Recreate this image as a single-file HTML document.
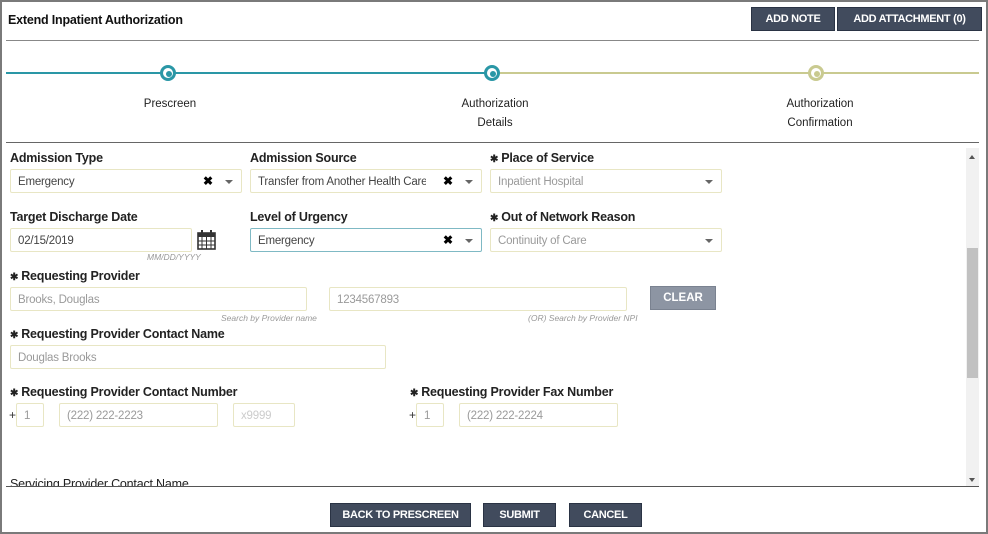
<!DOCTYPE html>
<html><head><style>
*{box-sizing:border-box;margin:0;padding:0}
body{width:988px;height:534px;background:#fff;font-family:"Liberation Sans",sans-serif;position:relative;overflow:hidden}
.a{position:absolute}
.frame{left:0;top:0;width:988px;height:534px;border:2px solid #7a7a7a}
.btn{position:absolute;background:#414b5d;color:#fff;font-weight:bold;font-size:11px;text-align:center;border:1px solid #2a3344;letter-spacing:-.3px}
.lbl{position:absolute;font-size:12.5px;color:#222;font-weight:bold;letter-spacing:-.2px}
.lbl b{font-size:10px;margin-right:3px}
.in{position:absolute;border:1px solid #e8e6c4;border-radius:2px;height:24px;font-size:11.5px;color:#9a9a9a;padding:6px 7px 0;white-space:nowrap;overflow:hidden;letter-spacing:-.2px}
.dk{color:#444}
.x{position:absolute;top:4px;font-size:12px;font-weight:bold;color:#000}
.car{position:absolute;top:10px;width:0;height:0;border-left:4px solid transparent;border-right:4px solid transparent;border-top:4px solid #666}
.hint{position:absolute;font-size:8.5px;font-style:italic;color:#999}
.dot{position:absolute;width:16px;height:16px;border-radius:50%;background:#fff}
.dot i{position:absolute;left:3px;top:3px;width:6px;height:6px;border-radius:50%}
.st{position:absolute;font-size:11.5px;color:#222;text-align:center;line-height:19px}
</style></head><body>
<div class="a frame"></div>
<div class="a" style="left:8px;top:13px;font-size:12.5px;font-weight:bold;color:#111;letter-spacing:-.2px">Extend Inpatient Authorization</div>
<div class="btn" style="left:751px;top:7px;width:84px;height:24px;line-height:23px">ADD NOTE</div>
<div class="btn" style="left:837px;top:7px;width:145px;height:24px;line-height:23px">ADD ATTACHMENT (0)</div>
<div class="a" style="left:6px;top:40px;width:973px;height:1px;background:#888"></div>
<div class="a" style="left:6px;top:72px;width:486px;height:2px;background:#2a97a6"></div>
<div class="a" style="left:492px;top:72px;width:487px;height:2px;background:#c9ca90"></div>
<div class="dot" style="left:160px;top:65px;border:3px solid #2a97a6"><i style="background:#2a97a6"></i></div>
<div class="dot" style="left:484px;top:65px;border:3px solid #2a97a6"><i style="background:#2a97a6"></i></div>
<div class="dot" style="left:808px;top:65px;border:3px solid #c9ca90"><i style="background:#c9ca90"></i></div>
<div class="st" style="left:110px;top:95px;width:120px">Prescreen</div>
<div class="st" style="left:435px;top:95px;width:120px">Authorization<br>Details</div>
<div class="st" style="left:760px;top:95px;width:120px">Authorization<br>Confirmation</div>
<div class="a" style="left:6px;top:142px;width:973px;height:1px;background:#666"></div>
<div class="a" style="left:966px;top:148px;width:13px;height:338px;background:#f1f1f1"></div>
<div class="a" style="left:967px;top:248px;width:11px;height:130px;background:#c1c1c1"></div>
<div class="a" style="left:969px;top:155px;border-left:3px solid transparent;border-right:3px solid transparent;border-bottom:4px solid #555"></div>
<div class="a" style="left:969px;top:478px;border-left:3px solid transparent;border-right:3px solid transparent;border-top:4px solid #555"></div>

<div class="lbl" style="left:10px;top:151px">Admission Type</div>
<div class="in dk" style="left:10px;top:169px;width:232px">Emergency<span class="x" style="left:192px">✖</span><span class="car" style="left:214px"></span></div>
<div class="lbl" style="left:250px;top:151px">Admission Source</div>
<div class="in dk" style="left:250px;top:169px;width:232px"><span style="display:inline-block;width:168px;overflow:hidden">Transfer from Another Health Care</span><span class="x" style="left:192px">✖</span><span class="car" style="left:214px"></span></div>
<div class="lbl" style="left:490px;top:151px"><b>✱</b>Place of Service</div>
<div class="in" style="left:490px;top:169px;width:232px">Inpatient Hospital<span class="car" style="left:214px"></span></div>

<div class="lbl" style="left:10px;top:210px">Target Discharge Date</div>
<div class="in dk" style="left:10px;top:228px;width:182px">02/15/2019</div>
<svg class="a" style="left:197px;top:230px" width="19" height="20" viewBox="0 0 19 20"><rect x="1" y="3" width="17" height="16" fill="none" stroke="#333" stroke-width="1.6"/><rect x="1" y="3" width="17" height="4" fill="#333"/><rect x="4" y="0" width="2" height="5" fill="#333"/><rect x="13" y="0" width="2" height="5" fill="#333"/><path d="M5 7v12M9.5 7v12M14 7v12M1 11h17M1 15h17" stroke="#333" stroke-width="1"/></svg>
<div class="hint" style="left:147px;top:252px">MM/DD/YYYY</div>
<div class="lbl" style="left:250px;top:210px">Level of Urgency</div>
<div class="in dk" style="left:250px;top:228px;width:232px;border-color:#7fb9c4">Emergency<span class="x" style="left:192px">✖</span><span class="car" style="left:214px"></span></div>
<div class="lbl" style="left:490px;top:210px"><b>✱</b>Out of Network Reason</div>
<div class="in" style="left:490px;top:228px;width:232px">Continuity of Care<span class="car" style="left:214px"></span></div>

<div class="lbl" style="left:10px;top:269px"><b>✱</b>Requesting Provider</div>
<div class="in" style="left:10px;top:287px;width:297px">Brooks, Douglas</div>
<div class="hint" style="left:221px;top:313px">Search by Provider name</div>
<div class="in" style="left:329px;top:287px;width:298px">1234567893</div>
<div class="hint" style="left:528px;top:313px">(OR) Search by Provider NPI</div>
<div class="a" style="left:650px;top:286px;width:66px;height:24px;background:#8d95a3;border:1px solid #7a8290;color:#fff;font-size:11.5px;font-weight:bold;text-align:center;line-height:22px">CLEAR</div>

<div class="lbl" style="left:10px;top:327px"><b>✱</b>Requesting Provider Contact Name</div>
<div class="in" style="left:10px;top:345px;width:376px">Douglas Brooks</div>

<div class="lbl" style="left:10px;top:385px"><b>✱</b>Requesting Provider Contact Number</div>
<div class="a" style="left:9px;top:408px;font-size:12px;color:#333">+</div>
<div class="in" style="left:16px;top:403px;width:28px">1</div>
<div class="in" style="left:59px;top:403px;width:159px">(222) 222-2223</div>
<div class="in" style="left:233px;top:403px;width:62px;color:#ccc">x9999</div>
<div class="lbl" style="left:410px;top:385px"><b>✱</b>Requesting Provider Fax Number</div>
<div class="a" style="left:409px;top:408px;font-size:12px;color:#333">+</div>
<div class="in" style="left:416px;top:403px;width:28px">1</div>
<div class="in" style="left:459px;top:403px;width:159px">(222) 222-2224</div>

<div class="a" style="left:0;top:474px;width:966px;height:12px;overflow:hidden"><div class="lbl" style="left:10px;top:3px;font-weight:normal;color:#222">Servicing Provider Contact Name</div></div>
<div class="a" style="left:6px;top:486px;width:973px;height:1px;background:#555"></div>

<div class="btn" style="left:330px;top:503px;width:141px;height:24px;line-height:23px">BACK TO PRESCREEN</div>
<div class="btn" style="left:483px;top:503px;width:73px;height:24px;line-height:23px">SUBMIT</div>
<div class="btn" style="left:569px;top:503px;width:73px;height:24px;line-height:23px">CANCEL</div>
</body></html>
